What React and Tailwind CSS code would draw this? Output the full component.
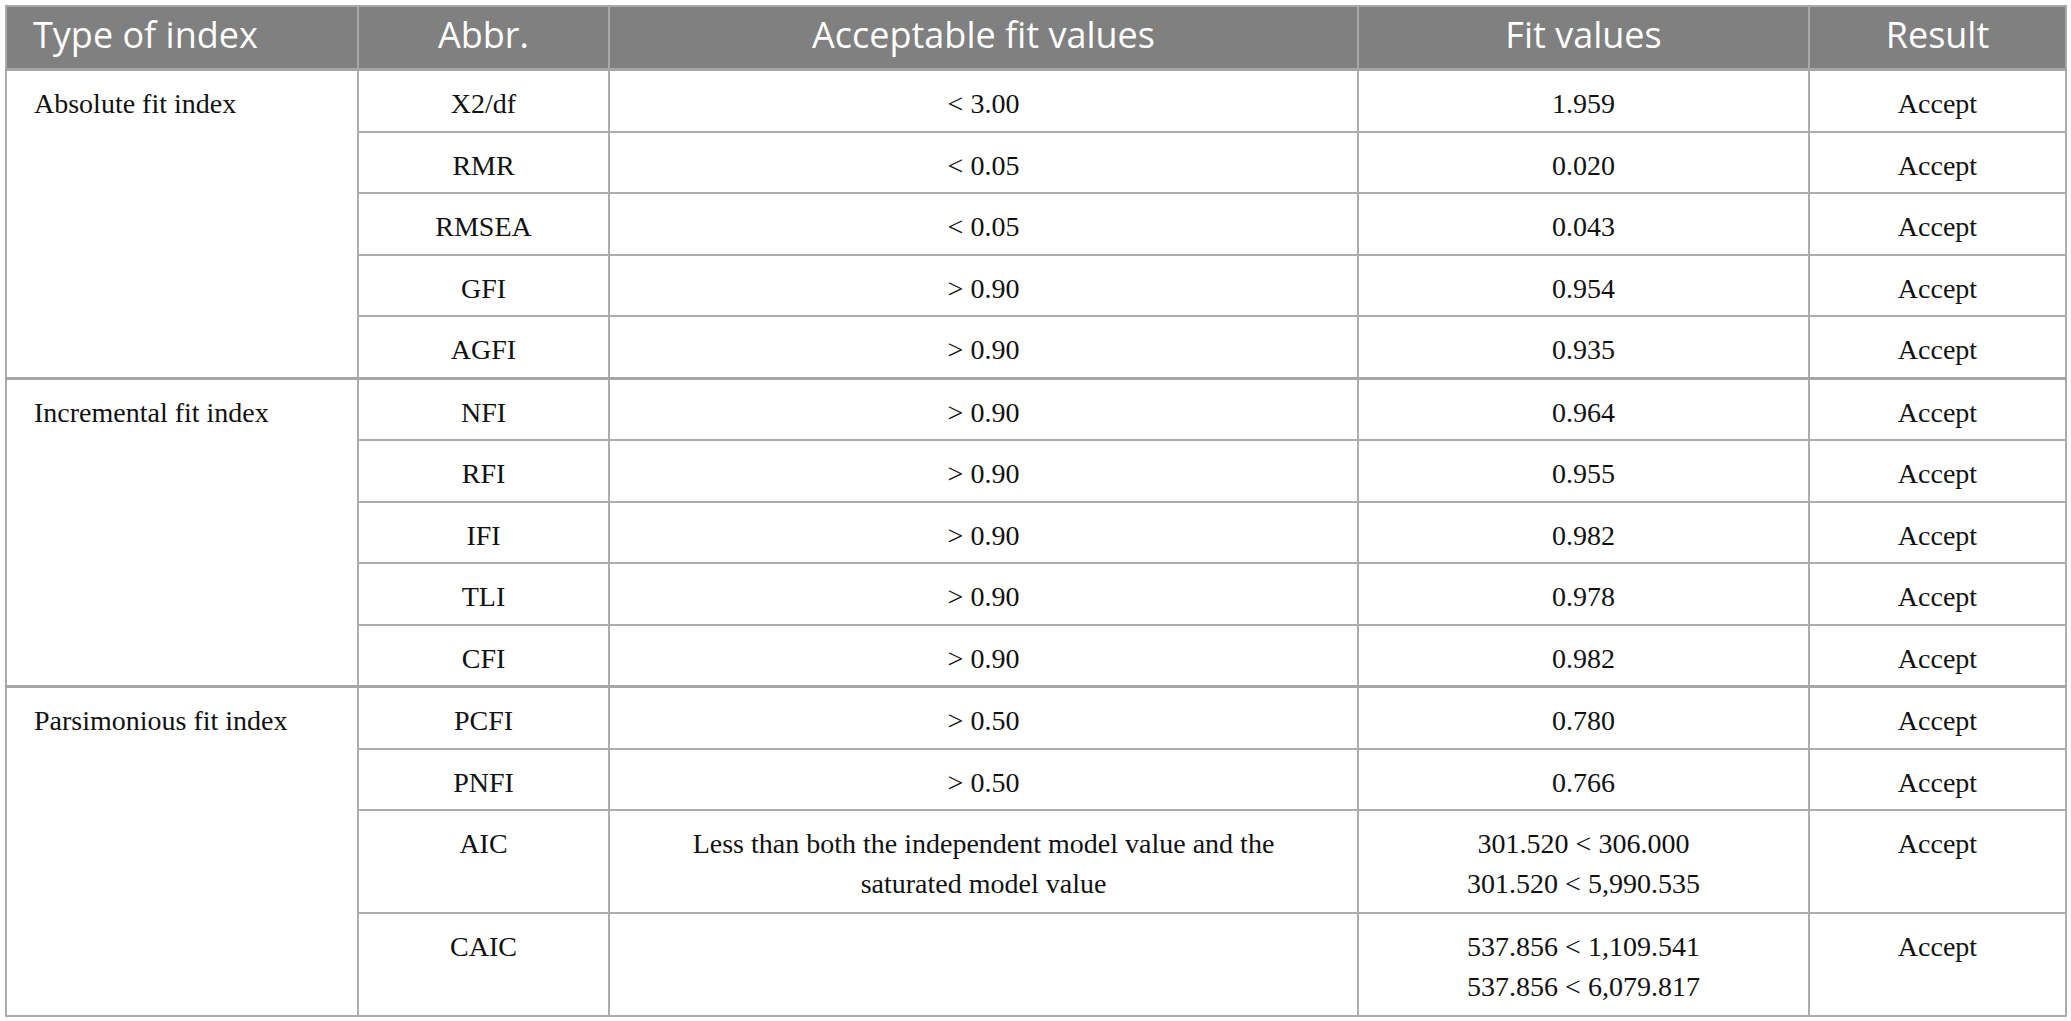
const groups = [
  {
    type: "Absolute fit index",
    rows: [
      { abbr: "X2/df", accept: ["< 3.00"], fit: ["1.959"] },
      { abbr: "RMR", accept: ["< 0.05"], fit: ["0.020"] },
      { abbr: "RMSEA", accept: ["< 0.05"], fit: ["0.043"] },
      { abbr: "GFI", accept: ["> 0.90"], fit: ["0.954"] },
      { abbr: "AGFI", accept: ["> 0.90"], fit: ["0.935"] },
    ],
  },
  {
    type: "Incremental fit index",
    rows: [
      { abbr: "NFI", accept: ["> 0.90"], fit: ["0.964"] },
      { abbr: "RFI", accept: ["> 0.90"], fit: ["0.955"] },
      { abbr: "IFI", accept: ["> 0.90"], fit: ["0.982"] },
      { abbr: "TLI", accept: ["> 0.90"], fit: ["0.978"] },
      { abbr: "CFI", accept: ["> 0.90"], fit: ["0.982"] },
    ],
  },
  {
    type: "Parsimonious fit index",
    rows: [
      { abbr: "PCFI", accept: ["> 0.50"], fit: ["0.780"] },
      { abbr: "PNFI", accept: ["> 0.50"], fit: ["0.766"] },
      {
        abbr: "AIC",
        accept: [
          "Less than both the independent model value and the",
          "saturated model value",
        ],
        fit: ["301.520 < 306.000", "301.520 < 5,990.535"],
      },
      {
        abbr: "CAIC",
        accept: [],
        fit: ["537.856 < 1,109.541", "537.856 < 6,079.817"],
      },
    ],
  },
];

const headCell =
  "border-2 border-[#a9a9a9] bg-[#808080] px-0 pb-[6px] pt-0 text-[36px] font-normal leading-[55px] text-white";
const bodyCell =
  "border-2 border-[#acacac] px-0 pb-[6.5px] pt-[13px] align-top text-[28px] leading-[40px] text-[#111]";

const Lines = ({ items }) =>
  items.map((line) => (
    <div key={line} className="whitespace-nowrap">
      {line}
    </div>
  ));

const App = () => {
  return (
    <div className="min-h-screen w-full bg-white pl-[5px] pt-[5px]">
      <table
        className="table-fixed border-collapse"
        style={{ width: 2060 }}
      >
        <colgroup>
          <col className="w-[352px]" />
          <col className="w-[251px]" />
          <col className="w-[749px]" />
          <col className="w-[451px]" />
          <col className="w-[257px]" />
        </colgroup>
        <thead className="font-['Open_Sans',sans-serif]">
          <tr className="h-[63px]">
            <th className={`${headCell} pl-[26px] text-left`}>Type of index</th>
            <th className={`${headCell} text-center`}>Abbr.</th>
            <th className={`${headCell} text-center`}>Acceptable fit values</th>
            <th className={`${headCell} text-center`}>Fit values</th>
            <th className={`${headCell} text-center`}>Result</th>
          </tr>
        </thead>
        <tbody className="font-['Liberation_Serif',serif]">
          {groups.map((group) =>
            group.rows.map((row, i) => {
              const tall = row.fit.length > 1;
              return (
                <tr
                  key={row.abbr}
                  className={`${tall ? "h-[103px]" : "h-[61.5px]"} ${
                    i === 0 ? "border-t-[3px] border-t-[#a6a6a6]" : ""
                  }`}
                >
                  {i === 0 && (
                    <td
                      rowSpan={group.rows.length}
                      className={`${bodyCell} pl-[27px] text-left`}
                    >
                      {group.type}
                    </td>
                  )}
                  <td className={`${bodyCell} text-center`}>{row.abbr}</td>
                  <td className={`${bodyCell} text-center`}>
                    <Lines items={row.accept} />
                  </td>
                  <td className={`${bodyCell} text-center`}>
                    <Lines items={row.fit} />
                  </td>
                  <td className={`${bodyCell} text-center`}>Accept</td>
                </tr>
              );
            })
          )}
        </tbody>
      </table>
    </div>
  );
};

export default App;
